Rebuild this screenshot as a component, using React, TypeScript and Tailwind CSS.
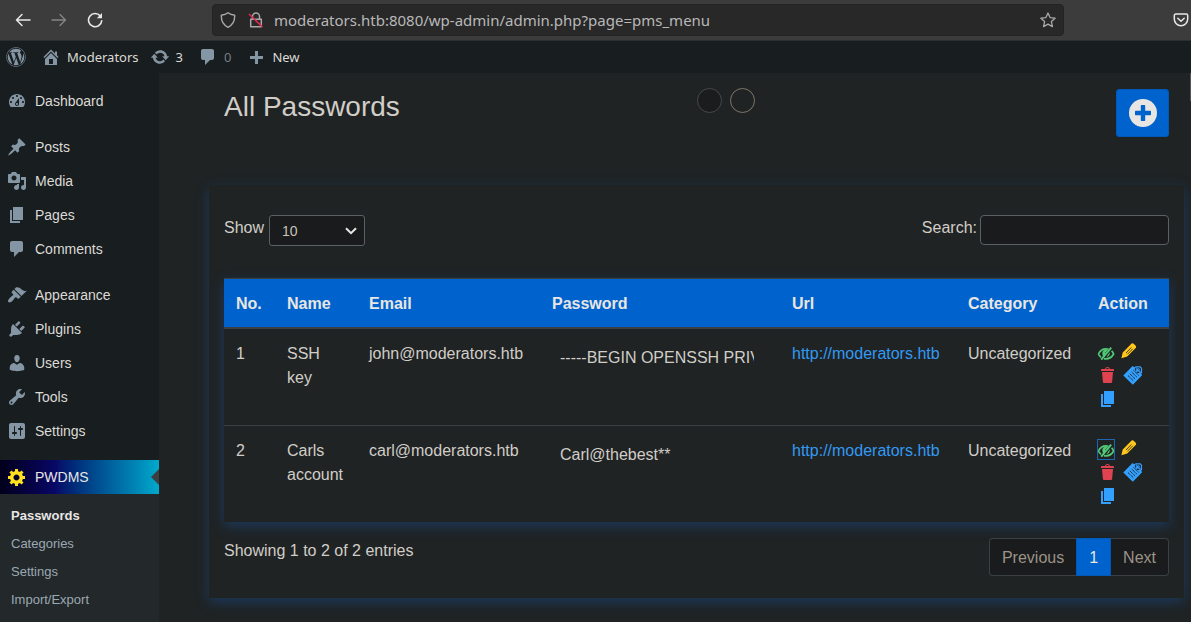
import type { ReactNode } from "react";
import { FaWordpress } from "react-icons/fa";

const paths = {
  home: "M16 8.5l1.53 1.53-1.06 1.06L10 4.6l-6.47 6.49-1.06-1.06L10 2.5l4 4v-2h2v4zm-6-2.46l6 5.99V18H4v-5.97zM12 17v-5H8v5h4z",
  update:
    "M10.2 3.28c3.53 0 6.43 2.61 6.92 6h2.08l-3.5 4-3.5-4h2.32c-.45-1.97-2.21-3.45-4.32-3.45-1.45 0-2.73.71-3.54 1.78L4.95 5.66C6.23 4.2 8.11 3.28 10.2 3.28zm-.4 13.44c-3.52 0-6.43-2.61-6.92-6H.8l3.5-4c1.17 1.33 2.33 2.67 3.5 4H5.48c.45 1.97 2.21 3.45 4.32 3.45 1.45 0 2.73-.71 3.54-1.78l1.71 1.95c-1.28 1.46-3.15 2.38-5.25 2.38z",
  comments: "M5 2h9c1.1 0 2 .9 2 2v7c0 1.1-.9 2-2 2h-2l-5 5v-5H5c-1.1 0-2-.9-2-2V4c0-1.1.9-2 2-2z",
  plus: "M17 9v3h-5v5H9v-5H4V9h5V4h3v5h5z",
  dashboard:
    "M3.76 16h12.48c1.1-1.37 1.76-3.11 1.76-5 0-4.42-3.58-8-8-8s-8 3.58-8 8c0 1.89.66 3.63 1.76 5zM10 4c.55 0 1 .45 1 1s-.45 1-1 1-1-.45-1-1 .45-1 1-1zM6 6c.55 0 1 .45 1 1s-.45 1-1 1-1-.45-1-1 .45-1 1-1zm8 0c.55 0 1 .45 1 1s-.45 1-1 1-1-.45-1-1 .45-1 1-1zm-5.37 5.55L12 7v6c0 1.1-.9 2-2 2s-2-.9-2-2c0-.57.24-1.08.63-1.45zM4 10c.55 0 1 .45 1 1s-.45 1-1 1-1-.45-1-1 .45-1 1-1zm12 0c.55 0 1 .45 1 1s-.45 1-1 1-1-.45-1-1 .45-1 1-1zm-5 3c0-.55-.45-1-1-1s-1 .45-1 1 .45 1 1 1 1-.45 1-1z",
  posts:
    "M10.44 3.02l1.82-1.82 6.36 6.35-1.83 1.82c-1.05-.68-2.48-.57-3.41.36l-.75.75c-.92.93-1.04 2.35-.35 3.41l-1.83 1.82-2.41-2.41-2.8 2.79c-.42.42-3.38 2.71-3.8 2.29s1.86-3.39 2.28-3.81l2.79-2.79L4.1 9.36l1.83-1.82c1.05.69 2.48.57 3.4-.36l.75-.75c.93-.92 1.05-2.35.36-3.41z",
  media:
    "M13 11V4c0-.55-.45-1-1-1h-1.67L9 1H5L3.67 3H2c-.55 0-1 .45-1 1v7c0 .55.45 1 1 1h10c.55 0 1-.45 1-1zM7 4.5c1.38 0 2.5 1.12 2.5 2.5S8.38 9.5 7 9.5 4.5 8.38 4.5 7 5.62 4.5 7 4.5zM14 6h5v10.5c0 1.38-1.12 2.5-2.5 2.5S14 17.88 14 16.5s1.12-2.5 2.5-2.5c.17 0 .34.02.5.05V9h-3V6zm-4 8.05V13h2v3.5c0 1.38-1.12 2.5-2.5 2.5S7 17.88 7 16.5 8.12 14 9.5 14c.17 0 .34.02.5.05z",
  pages: "M6 15V2h10v13H6zm-1 1h8v2H3V5h2v11z",
  appearance:
    "M14.48 11.06L7.41 3.99l1.5-1.5c.5-.56 2.3-.47 3.51.32 1.21.8 1.43 1.28 2.91 2.1 1.18.64 2.45 1.26 4.45.85zm-.71.71L6.7 4.7 4.93 6.47c-.39.39-.39 1.02 0 1.41l1.06 1.06c.39.39.39 1.03 0 1.42-.6.6-1.43 1.11-2.21 1.69-.35.26-.7.53-1.01.84C1.43 14.23.4 16.08 1.4 17.07c.99 1 2.84-.03 4.18-1.36.31-.31.58-.66.85-1.02.57-.78 1.08-1.61 1.69-2.21.39-.39 1.02-.39 1.41 0l1.06 1.06c.39.39 1.02.39 1.41 0z",
  plugins:
    "M13.11 4.36L9.87 7.6 8 5.73l3.24-3.24c.35-.34 1.05-.2 1.56.32.52.51.66 1.21.31 1.55zm-8 1.77l.91-1.12 9.01 9.01-1.19.84c-.71.71-2.63 1.16-3.82 1.16H6.14L4.9 17.26c-.59.59-1.54.59-2.12 0-.59-.58-.59-1.53 0-2.12l1.24-1.24v-3.88c0-1.13.4-3.19 1.09-3.89zm7.26 3.97l3.24-3.24c.34-.35 1.04-.21 1.55.31.52.51.66 1.21.31 1.55l-3.24 3.25z",
  users:
    "M10 9.25c-2.27 0-2.73-3.44-2.73-3.44C7 4.02 7.82 2 9.97 2c2.16 0 2.98 2.02 2.71 3.81 0 0-.41 3.44-2.68 3.44zm0 2.57L12.72 10c2.39 0 4.52 2.33 4.52 4.53v2.49s-3.65 1.13-7.24 1.13c-3.65 0-7.24-1.13-7.24-1.13v-2.49c0-2.25 1.94-4.48 4.47-4.48z",
  tools:
    "M16.68 9.77c-1.34 1.34-3.3 1.67-4.95.99l-5.41 6.52c-.99.99-2.59.99-3.58 0s-.99-2.59 0-3.57l6.52-5.42c-.68-1.65-.35-3.61.99-4.95 1.28-1.28 3.12-1.62 4.72-1.06l-2.89 2.89 2.82 2.82 2.86-2.87c.53 1.58.18 3.39-1.08 4.65zM3.81 16.21c.4.39 1.04.39 1.43 0 .4-.4.4-1.04 0-1.43-.39-.4-1.03-.4-1.43 0-.39.39-.39 1.03 0 1.43z",
  settings:
    "M18 16V4c0-1.1-.9-2-2-2H4c-1.1 0-2 .9-2 2v12c0 1.1.9 2 2 2h12c1.1 0 2-.9 2-2zM8 11h1c.55 0 1 .45 1 1s-.45 1-1 1H8v1.5c0 .28-.22.5-.5.5s-.5-.22-.5-.5V13H6c-.55 0-1-.45-1-1s.45-1 1-1h1V5.5c0-.28.22-.5.5-.5s.5.22.5.5V11zm5-2h-1c-.55 0-1-.45-1-1s.45-1 1-1h1V5.5c0-.28.22-.5.5-.5s.5.22.5.5V7h1c.55 0 1 .45 1 1s-.45 1-1 1h-1v5.5c0 .28-.22.5-.5.5s-.5-.22-.5-.5V9z",
  gear: "M18 12h-2.18c-.17.7-.44 1.35-.81 1.93l1.54 1.54-2.1 2.1-1.54-1.54c-.58.36-1.23.63-1.91.79V19H8v-2.18c-.68-.16-1.33-.43-1.91-.79l-1.54 1.54-2.12-2.12 1.54-1.54c-.36-.58-.63-1.23-.79-1.91H1V9.03h2.17c.16-.7.44-1.35.8-1.94L2.43 5.55l2.1-2.1 1.54 1.54c.58-.37 1.24-.64 1.93-.81V2h3v2.18c.68.16 1.33.43 1.91.79l1.54-1.54 2.12 2.12-1.54 1.54c.36.59.64 1.24.8 1.94H18V12zm-8.5 1.5c1.66 0 3-1.34 3-3s-1.34-3-3-3-3 1.34-3 3 1.34 3 3 3z",
  trash:
    "M12 4h3c.6 0 1 .4 1 1v1H3V5c0-.6.5-1 1-1h3c.2-1.1 1.3-2 2.5-2s2.3.9 2.5 2zM8 4h3c-.2-.6-.9-1-1.5-1S8.2 3.4 8 4zM4 7h11l-.9 10.1c0 .5-.5.9-1 .9H5.9c-.5 0-.9-.4-1-.9L4 7z",
};

type IconName = keyof typeof paths;

function Icon({ name, className = "size-5" }: { name: IconName; className?: string }) {
  return (
    <svg viewBox="0 0 20 20" fill="currentColor" aria-hidden="true" className={`shrink-0 ${className}`}>
      <path d={paths[name]} />
    </svg>
  );
}

function HiddenEye() {
  return (
    <svg viewBox="0 0 18 18" className="size-[18px] shrink-0" fill="none" stroke="currentColor" aria-hidden="true">
      <path d="M1.400 10C3 6.500 5.700 4.800 9 4.800c1 0 1.800.1 2.500.4M14.600 6.900c.8.800 1.500 1.800 2 3.100-1.700 3.200-4.300 4.800-7.700 4.800-.7 0-1.300 0-1.900-.2M4 13.200c-1.100-.8-2-1.900-2.600-3.200" strokeWidth="1.700" />
      <path d="M5.700 7.500c-.8 1.900-.3 3.800.8 4.900l2-2.200c-.6-1.200-.1-2.300 1-2.700l1.500-1.700C9 5.200 6.800 5.700 5.700 7.500zM12.700 8.300c.6 2.400-.9 4.500-3.300 4.900z" fill="currentColor" stroke="none" />
      <path d="M4.200 15.700L14.200 3.700" strokeWidth="2" />
    </svg>
  );
}

function Pencil() {
  return (
    <svg viewBox="0 0 18 18" className="size-[18px] shrink-0" fill="currentColor" aria-hidden="true">
      <path d="M11.400 1.700c.7-.7 1.600-.6 2.300 0l2 2c.6.700.6 1.500 0 2.200L7.200 14.600 1.400 16.300l1.300-5.900z" />
      <path d="M6 11l5.300-5.500M7.400 12.300l5.300-5.500" stroke="#1f2324" strokeWidth=".8" />
    </svg>
  );
}

function NoteTag() {
  return (
    <svg viewBox="0 0 20 20" className="size-5 shrink-0" fill="none" stroke="currentColor" aria-hidden="true">
      <path d="M10.200 1.700L1.500 10.600l8.300 8 8.700-8.900" strokeWidth="1.700" />
      <path d="M10.200 1.700L1.500 10.600l8.300 8 8.900-9-1.200-3.100-4-4z" fill="currentColor" stroke="none" />
      <path d="M5 10.600l5.500 5.300M6.800 8.800l5.500 5.300M8.600 7l5.500 5.300M10.400 5.200l5.500 5.300" stroke="#1f2324" strokeWidth="1" strokeDasharray="1.500 .4" />
      <path d="M12.600 5.600l.2-3M16.300 7.400l-2.500-.3" stroke="#1f2324" strokeWidth="1.100" />
      <path d="M12.200 1.800h5l1.300 1.400v5" strokeWidth="1.200" />
      <circle cx="15.500" cy="4.600" r="1" strokeWidth="1" />
    </svg>
  );
}

function BrowserBar() {
  return (
    <header className="flex h-[41px] items-center border-b border-[#2c2f30] bg-[#3c3c3c] pr-0.5 text-[#e8e8e8]">
      <nav aria-label="Browser" className="flex w-[212px] shrink-0 items-center gap-5 pl-[15px]">
        <button aria-label="Back">
          <svg viewBox="0 0 16 16" className="size-4" fill="none" stroke="currentColor" strokeWidth="1.500" strokeLinecap="round" strokeLinejoin="round">
            <path d="M15 8H1.500M7 2.500L1.500 8 7 13.500" />
          </svg>
        </button>
        <button aria-label="Forward" className="text-[#858585]">
          <svg viewBox="0 0 16 16" className="size-4" fill="none" stroke="currentColor" strokeWidth="1.300" strokeLinecap="round" strokeLinejoin="round">
            <path d="M1 8h13.500M9 2.500L14.500 8 9 13.500" />
          </svg>
        </button>
        <button aria-label="Reload">
          <svg viewBox="0 0 16 16" className="size-4" fill="none" stroke="currentColor" strokeWidth="1.600" strokeLinecap="round">
            <path d="M13.300 4A6.600 6.600 0 1 0 14.700 8.800" />
            <path d="M15 1v5.200H9.800z" fill="currentColor" stroke="none" />
          </svg>
        </button>
      </nav>
      <div className="flex h-8 min-w-0 flex-1 items-center rounded border border-[#232323] bg-[#282828] px-[7px] text-[#a9a9a9]">
        <svg viewBox="0 0 16 16" className="size-4 shrink-0" fill="none" stroke="currentColor" strokeWidth="1.400" strokeLinejoin="round" aria-hidden="true">
          <path d="M8 .8c1.800 1.400 4 2.200 6.700 2.500C14.900 8.500 13 13 8 15.300 3 13 1.100 8.500 1.300 3.300 4 3 6.200 2.200 8 .8z" />
        </svg>
        <svg viewBox="0 0 16 16" className="ml-3 size-4 shrink-0" fill="none" stroke="currentColor" strokeWidth="1.500" aria-hidden="true">
          <path d="M4.500 7V4.500a3.500 3.500 0 0 1 7 0V7M2.700 7.300h10.600v7.500H2.700z" strokeLinejoin="round" />
          <path d="M1 2l13.500 13" stroke="#e22850" strokeWidth="1.600" />
        </svg>
        <input
          aria-label="Address"
          readOnly
          value="moderators.htb:8080/wp-admin/admin.php?page=pms_menu"
          className="ml-2.5 min-w-0 flex-1 bg-transparent font-['Noto_Sans',sans-serif] text-[15px] text-[#b8b8b8] outline-none"
        />
        <button aria-label="Bookmark">
          <svg viewBox="0 0 16 16" className="size-4" fill="none" stroke="currentColor" strokeWidth="1.300" strokeLinejoin="round">
            <path d="M8 1l2.100 4.600 5 .6-3.700 3.400 1 5L8 12.100l-4.400 2.500 1-5L.900 6.200l5-.6z" />
          </svg>
        </button>
      </div>
      <button aria-label="Pocket" className="ml-[109px] shrink-0">
        <svg viewBox="0 0 16 16" className="size-4" fill="none" stroke="currentColor" strokeWidth="1.500" strokeLinecap="round" strokeLinejoin="round">
          <path d="M2.800 2h10.400c.9 0 1.500.6 1.500 1.500V7a6.700 6.700 0 0 1-13.400 0V3.500C1.300 2.600 1.900 2 2.800 2z" />
          <path d="M4.800 6.200L8 9.200l3.200-3" />
        </svg>
      </button>
    </header>
  );
}

function AdminBar() {
  return (
    <nav aria-label="Toolbar" className="flex h-8 items-center bg-[#181d1f] pl-1.5 font-['Noto_Sans',sans-serif] text-[13px] text-[#dcdad6]">
      <a href="#" aria-label="About WordPress" className="text-[#8495a3]">
        <FaWordpress className="size-5" />
      </a>
      <a href="#" className="ml-[15px] flex items-center gap-1.5">
        <Icon name="home" className="size-5 text-[#8495a3]" />
        Moderators
      </a>
      <a href="#" className="ml-[11px] flex items-center gap-1.5">
        <Icon name="update" className="size-5 text-[#8495a3]" />3
      </a>
      <a href="#" className="ml-[15px] flex items-center gap-1.5 text-[#777d80]">
        <Icon name="comments" className="size-5 text-[#8495a3]" />0
      </a>
      <a href="#" className="ml-[15px] flex items-center gap-1.5">
        <Icon name="plus" className="size-5 text-[#8495a3]" />
        New
      </a>
    </nav>
  );
}

const menuGroups: { icon: IconName; label: string }[][] = [
  [{ icon: "dashboard", label: "Dashboard" }],
  [
    { icon: "posts", label: "Posts" },
    { icon: "media", label: "Media" },
    { icon: "pages", label: "Pages" },
    { icon: "comments", label: "Comments" },
  ],
  [
    { icon: "appearance", label: "Appearance" },
    { icon: "plugins", label: "Plugins" },
    { icon: "users", label: "Users" },
    { icon: "tools", label: "Tools" },
    { icon: "settings", label: "Settings" },
  ],
];

function Sidebar() {
  return (
    <aside className="w-[159px] shrink-0 bg-[#181d1f] pt-[11px] text-[14px] text-[#dcdad6]">
      <nav aria-label="Main menu">
        <div className="flex flex-col gap-3">
          {menuGroups.map((group) => (
            <ul key={group[0].label}>
              {group.map((item) => (
                <li key={item.label}>
                  <a href="#" className="flex h-[34px] items-center gap-2 pl-[7px]">
                    <Icon name={item.icon} className="size-5 text-[#8495a3]" />
                    {item.label}
                  </a>
                </li>
              ))}
            </ul>
          ))}
          <a
            href="#"
            className="relative flex h-[34px] items-center gap-2 bg-linear-to-r from-[#02001c] via-[#080867] via-35% to-[#00a9cc] pl-[7px] text-[#e8e6e3]"
          >
            <Icon name="gear" className="size-5 text-[#ffe21f]" />
            PWDMS
            <svg viewBox="0 0 8 16" className="absolute top-[9px] right-0 h-4 w-2" aria-hidden="true">
              <path d="M8 0v16L0 8z" fill="#3a3f41" />
            </svg>
          </a>
        </div>
        <ul className="bg-[#23282b] pt-2 pb-3 text-[13px] text-[#9ba8b2]">
          <li>
            <a href="#" className="block pl-[11px] leading-7 font-bold text-[#e8e6e3]">Passwords</a>
          </li>
          {["Categories", "Settings", "Import/Export"].map((label) => (
            <li key={label}>
              <a href="#" className="block pl-[11px] leading-7">{label}</a>
            </li>
          ))}
        </ul>
      </nav>
    </aside>
  );
}

const rows = [
  { no: 1, name: "SSH key", email: "john@moderators.htb", password: "-----BEGIN OPENSSH PRIVATE KEY-----", focused: false },
  { no: 2, name: "Carls account", email: "carl@moderators.htb", password: "Carl@thebest**", focused: true },
];

function Th({ width, children }: { width: string; children: ReactNode }) {
  return (
    <th scope="col" className={`border-t border-b-2 border-t-[#3a4043] border-b-[#3a4043] px-3 pt-[13px] pb-[11px] text-left font-bold ${width}`}>
      {children}
    </th>
  );
}

function Actions({ focused }: { focused: boolean }) {
  return (
    <div className="-mr-3 flex h-[72px] flex-col">
      <div className="-ml-px flex h-[21px] items-start gap-[5px]">
        <button
          aria-label="Show password"
          className={`flex h-[21px] w-[18px] items-center justify-center text-[#52c975] ${focused ? "outline-1 -outline-offset-1 outline-[#1f66b0]" : ""}`}
        >
          <HiddenEye />
        </button>
        <button aria-label="Edit" className="text-[#ffc61c]">
          <Pencil />
        </button>
      </div>
      <div className="flex h-6 items-center gap-[5px]">
        <button aria-label="Delete" className="text-[#e04350]">
          <Icon name="trash" />
        </button>
        <button aria-label="Clone" className="text-[#33a0ff]">
          <NoteTag />
        </button>
      </div>
      <div className="flex h-6 items-center">
        <button aria-label="Copy" className="text-[#33a0ff]">
          <Icon name="pages" />
        </button>
      </div>
    </div>
  );
}

function PasswordTable() {
  const cell = "border-[#3a3e40] px-3 pt-[13px] pb-[11px] align-top";
  return (
    <table className="w-full border-separate border-spacing-0 shadow-[0_4px_12px_rgba(24,85,160,0.45)]">
      <thead className="bg-[#0062cc] text-[#e8e6e3]">
        <tr>
          <Th width="w-[51px]">No.</Th>
          <Th width="w-[82px]">Name</Th>
          <Th width="w-[183px]">Email</Th>
          <Th width="w-[240px]">Password</Th>
          <Th width="w-[176px]">Url</Th>
          <Th width="w-[130px]">Category</Th>
          <Th width="w-[83px]">Action</Th>
        </tr>
      </thead>
      <tbody className="bg-[#1f2324] [&>tr+tr>td]:border-t">
        {rows.map((row) => (
          <tr key={row.no}>
            <td className={cell}>{row.no}</td>
            <td className={cell}>{row.name}</td>
            <td className={cell}>{row.email}</td>
            <td className={cell}>
              <input
                aria-label={`Password ${row.no}`}
                readOnly
                value={row.password}
                className="block h-8 w-[210px] bg-transparent px-2 outline-none"
              />
            </td>
            <td className={cell}>
              <a href="#" className="text-[#3399f3]">http://moderators.htb</a>
            </td>
            <td className={cell}>Uncategorized</td>
            <td className={cell}>
              <Actions focused={row.focused} />
            </td>
          </tr>
        ))}
      </tbody>
    </table>
  );
}

function Main() {
  return (
    <main className="relative min-w-0 flex-1 overflow-hidden bg-[#1f2324] pr-[7px] pb-6 pl-[50px]">
      <div className="flex h-28 items-start px-[15px] pt-[15px]">
        <h1 className="w-1/2 text-[28px] leading-[38px]">All Passwords</h1>
        <div className="flex flex-1 gap-2">
          <span className="size-[25px] rounded-full border border-[#45494b] bg-[#1a1c1d]" />
          <span className="size-[25px] rounded-full border border-[#7f7668]" />
        </div>
        <button aria-label="Add password" className="mt-px flex h-12 w-[53px] shrink-0 items-center justify-center rounded-[3px] border border-[#0058b8] bg-[#0062cc]">
          <svg viewBox="0 0 28 28" className="size-7" aria-hidden="true">
            <circle cx="14" cy="14" r="14" fill="#e8e6e3" />
            <path d="M12.500 6h3q.7 0 .7.700v5.100h5.100q.7 0 .7.700v3q0 .7-.7.700h-5.100v5.100q0 .7-.7.700h-3q-.7 0-.7-.7v-5.100H6.700q-.7 0-.7-.7v-3q0-.7.7-.7h5.100V6.700q0-.7.7-.7z" fill="#0062cc" />
          </svg>
        </button>
      </div>

      <section className="bg-[#1f2324] px-[15px] pt-[30px] pb-[22px] shadow-[0_4px_12px_rgba(24,85,160,0.45)]">
        <div className="flex items-start justify-between pb-8">
          <div className="flex items-start gap-[5px]">
            <label htmlFor="page-size" className="leading-[26px]">Show</label>
            <div className="relative flex">
              <select
                id="page-size"
                defaultValue="10"
                className="h-[31px] w-24 appearance-none rounded-[3px] border border-[#5a6164] bg-[#1a1b1d] px-3 text-[14px] text-[#c8c3bc]"
              >
                <option>10</option>
                <option>25</option>
                <option>50</option>
              </select>
              <svg viewBox="0 0 12 8" className="pointer-events-none absolute top-3 right-2 h-2 w-3" fill="none" stroke="#e8e6e3" strokeWidth="2" aria-hidden="true">
                <path d="M1 1.200l5 5 5-5" />
              </svg>
            </div>
          </div>
          <div className="flex items-start gap-[3px]">
            <label htmlFor="search" className="leading-[26px]">Search:</label>
            <input id="search" type="search" className="h-[30px] w-[189px] rounded border border-[#5a6164] bg-[#1a1b1d] px-2 text-[14px]" />
          </div>
        </div>

        <PasswordTable />

        <div className="flex items-start justify-between pt-4">
          <p className="leading-[26px]">Showing 1 to 2 of 2 entries</p>
          <nav aria-label="Pagination" className="flex text-[#9b9387]">
            <button className="rounded-l border border-r-0 border-[#3a4043] bg-[#1a1b1d] px-3 pt-[7px] pb-[5px]">Previous</button>
            <button aria-current="page" className="border border-[#0058b8] bg-[#0062cc] px-3 pt-[7px] pb-[5px] text-[#e8e6e3]">1</button>
            <button className="rounded-r border border-l-0 border-[#3a4043] bg-[#1a1b1d] px-3 pt-[7px] pb-[5px]">Next</button>
          </nav>
        </div>
      </section>
      <div className="absolute top-0 right-0 h-7 w-px bg-[#50575b]" />
    </main>
  );
}

export default function App() {
  return (
    <div className="flex min-h-screen flex-col bg-[#181d1f] font-['Liberation_Sans',Arial,sans-serif] text-[16px] leading-6 text-[#d1cdc7]">
      <BrowserBar />
      <AdminBar />
      <div className="flex flex-1">
        <Sidebar />
        <Main />
      </div>
    </div>
  );
}
